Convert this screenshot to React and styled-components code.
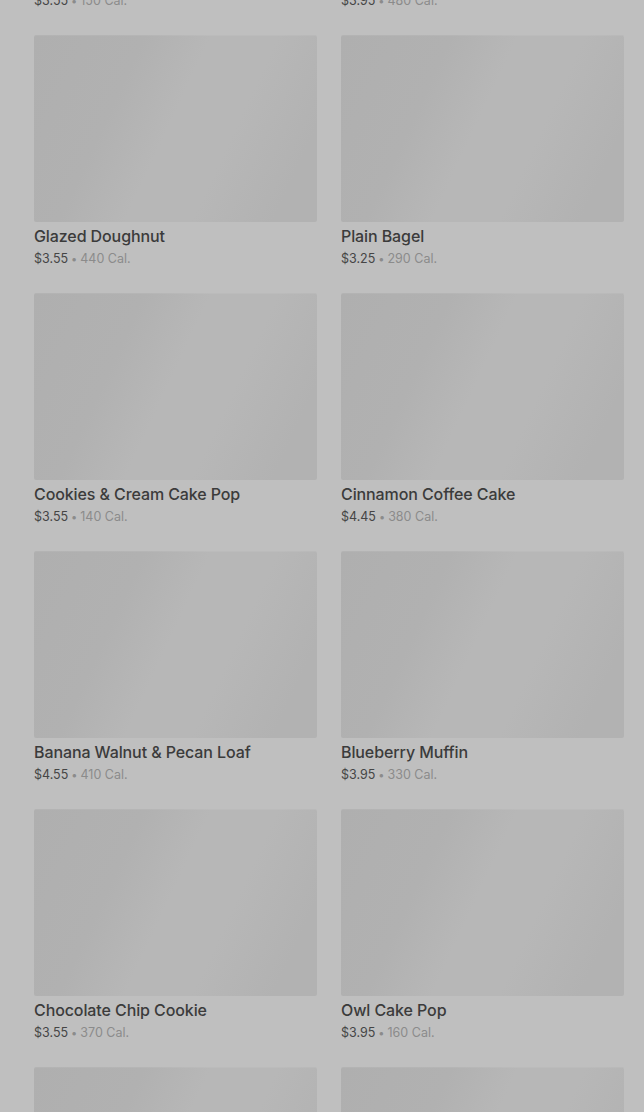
import React from "react";
import styled, { createGlobalStyle } from "styled-components";

const Global = createGlobalStyle`
  html, body { margin: 0; padding: 0; background: #bfbfbf; overflow: hidden; }
  body { font-family: Inter, "Open Sans", "Liberation Sans", sans-serif; }
`;

const Page = styled.div`
  width: 644px;
  height: 1112px;
  overflow: hidden;
  background: #bfbfbf;
`;

const Grid = styled.div`
  display: grid;
  grid-template-columns: 283px 283px;
  column-gap: 24px;
  row-gap: 25px;
  padding-left: 34px;
  margin-top: -223px;
`;

const Card = styled.div`
  display: flex;
  flex-direction: column;
`;

const Thumb = styled.div`
  height: 187px;
  border-radius: 2px;
  background: linear-gradient(
    115deg,
    #afafaf 0%,
    #b1b1b1 30%,
    #b7b7b7 48%,
    #b7b7b7 66%,
    #b2b2b2 88%,
    #b2b2b2 100%
  );
  box-shadow: inset 0 1px 0 rgba(255, 255, 255, 0.06);
`;

const Title = styled.div`
  margin-top: 4px;
  font-size: 16px;
  line-height: 20px;
  font-weight: 500;
  letter-spacing: -0.1px;
  color: #3b3b3b;
  white-space: nowrap;
`;

const Meta = styled.div`
  margin-top: 4px;
  font-size: 12.5px;
  line-height: 18px;
  color: #8b8b8b;
  white-space: nowrap;
`;

const Price = styled.span`
  color: #454545;
`;

const Dot = styled.span`
  margin: 0 3px;
  font-size: 11px;
`;

const items = [
  { name: "Butter Croissant", price: "$3.55", cal: "150" },
  { name: "Everything Bagel", price: "$3.95", cal: "480" },
  { name: "Glazed Doughnut", price: "$3.55", cal: "440" },
  { name: "Plain Bagel", price: "$3.25", cal: "290" },
  { name: "Cookies & Cream Cake Pop", price: "$3.55", cal: "140" },
  { name: "Cinnamon Coffee Cake", price: "$4.45", cal: "380" },
  { name: "Banana Walnut & Pecan Loaf", price: "$4.55", cal: "410" },
  { name: "Blueberry Muffin", price: "$3.95", cal: "330" },
  { name: "Chocolate Chip Cookie", price: "$3.55", cal: "370" },
  { name: "Owl Cake Pop", price: "$3.95", cal: "160" },
  { name: "Birthday Cake Pop", price: "$3.55", cal: "160" },
  { name: "Chocolate Croissant", price: "$3.95", cal: "300" },
];

export default function App() {
  return (
    <Page>
      <Global />
      <Grid>
        {items.map((it, i) => (
          <Card key={i}>
            <Thumb />
            <Title>{it.name}</Title>
            <Meta>
              <Price>{it.price}</Price>
              <Dot>•</Dot>
              {it.cal} Cal.
            </Meta>
          </Card>
        ))}
      </Grid>
    </Page>
  );
}
